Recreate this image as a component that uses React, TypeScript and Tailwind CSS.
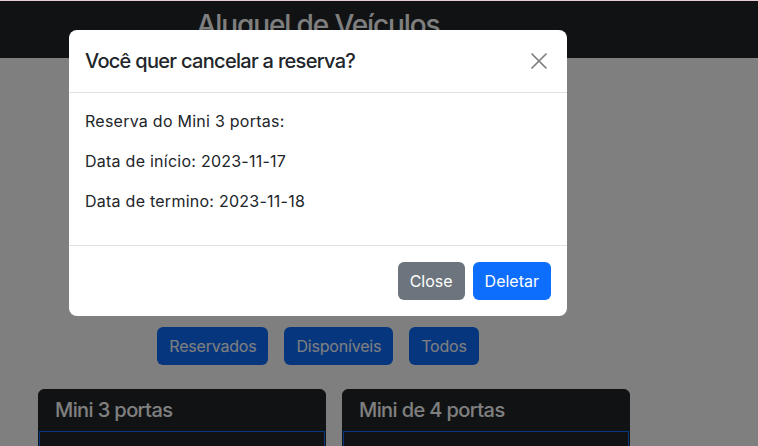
const filters = ['Reservados', 'Disponíveis', 'Todos'];
const cars = ['Mini 3 portas', 'Mini de 4 portas'];

function CloseIcon() {
  return (
    <svg width="16" height="16" viewBox="0 0 16 16" className="text-[#7d7d7d]">
      <path d="M1 1L15 15M15 1L1 15" stroke="currentColor" strokeWidth="1.7" strokeLinecap="round" />
    </svg>
  );
}

function ConfirmModal() {
  return (
    <div className="absolute inset-0 z-10 bg-black/50">
      <div className="ml-[69px] mt-[30px] w-[498px] rounded-lg bg-white text-[#212529]">
        <div className="flex items-center justify-between border-b border-[#dee2e6] p-4">
          <h5 className="text-[20px] font-medium leading-[30px] tracking-[-0.7px]">Você quer cancelar a reserva?</h5>
          <button className="flex h-6 w-6 items-center justify-center">
            <CloseIcon />
          </button>
        </div>
        <div className="p-4 text-base leading-6 tracking-[0.25px]">
          <p className="mb-4">Reserva do Mini 3 portas:</p>
          <p className="mb-4">Data de início: 2023-11-17</p>
          <p className="mb-4">Data de termino: 2023-11-18</p>
        </div>
        <div className="flex justify-end gap-2 border-t border-[#dee2e6] px-4 py-4">
          <button className="h-[38px] rounded-md bg-[#6c757d] px-3 text-base text-white">Close</button>
          <button className="h-[38px] rounded-md bg-[#0d6efd] px-3 text-base text-white">Deletar</button>
        </div>
      </div>
    </div>
  );
}

export default function App() {
  return (
    <div className="relative h-[446px] w-[758px] overflow-hidden bg-white font-['Inter','Liberation_Sans',sans-serif]">
      <div className="absolute inset-x-0 top-0 z-20 h-px bg-[#e6cdd2]" />
      <header className="h-[58px] bg-[#212529] pt-2">
        <h2 className="w-[636px] text-center text-[28px] font-medium leading-[34px] tracking-[-1.1px] text-white">
          Aluguel de Veículos
        </h2>
      </header>
      <main className="w-[636px] pt-[269px]">
        <div className="flex justify-center gap-4 tracking-[-0.2px]">
          {filters.map((f) => (
            <button key={f} className="h-[38px] rounded-md bg-[#0d6efd] px-3 text-base text-white">
              {f}
            </button>
          ))}
        </div>
        <div className="mt-6 flex gap-4 pl-[38px]">
          {cars.map((c) => (
            <div key={c} className="w-[288px] rounded-md border border-[#212529] bg-[#212529]">
              <h5 className="px-4 pb-[9px] pt-2 text-[20px] font-medium leading-6 tracking-[-0.6px] text-white">{c}</h5>
              <div className="h-[40px] border border-[#0d6efd]" />
            </div>
          ))}
        </div>
      </main>
      <ConfirmModal />
    </div>
  );
}
